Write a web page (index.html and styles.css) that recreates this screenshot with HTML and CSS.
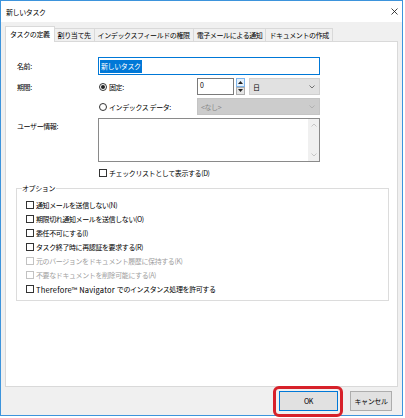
FILE: index.html
```html
<!DOCTYPE html>
<html lang="ja">
<head>
<meta charset="utf-8">
<title>新しいタスク</title>
<link rel="stylesheet" href="styles.css">
</head>
<body>
<div class="window">
  <div class="titlebar">
    <span class="title">新しいタスク</span>
    <svg class="close" viewBox="0 0 7 7" width="7" height="7"><path d="M0.5 0.5L6.5 6.5M6.5 0.5L0.5 6.5" stroke="#111" stroke-width="0.8" fill="none"/></svg>
  </div>
  <div class="client">
    <div class="tabs">
      <div class="tab active">タスクの定義</div>
      <div class="tab">割り当て先</div>
      <div class="tab">インデックスフィールドの権限</div>
      <div class="tab">電子メールによる通知</div>
      <div class="tab">ドキュメントの作成</div>
    </div>
    <div class="panel">
      <div class="form">
        <div class="lbl">名前:</div>
        <div class="input focus"><span class="sel">新しいタスク</span></div>

        <div class="lbl">期間:</div>
        <div class="field">
          <span class="opt"><span class="radio on"></span>固定:</span>
          <div class="spin-input">0</div>
          <div class="spin-btns">
            <div class="spin-btn up"><svg viewBox="0 0 5 3" width="5" height="3"><path d="M0 3L2.5 0L5 3Z" fill="#222"/></svg></div>
            <div class="spin-btn"><svg viewBox="0 0 5 3" width="5" height="3"><path d="M0 0L2.5 3L5 0Z" fill="#222"/></svg></div>
          </div>
          <div class="combo unit">
            <span>日</span>
            <svg class="chev" viewBox="0 0 6 4" width="6" height="4"><path d="M0.5 0.5L3 3L5.5 0.5" stroke="#555" stroke-width="0.8" fill="none"/></svg>
          </div>
        </div>

        <div></div>
        <div class="field">
          <span class="opt"><span class="radio"></span>インデックス データ:</span>
          <div class="combo disabled">
            <span>&lt;なし&gt;</span>
            <svg class="chev" viewBox="0 0 6 4" width="6" height="4"><path d="M0.5 0.5L3 3L5.5 0.5" stroke="#aaa" stroke-width="0.8" fill="none"/></svg>
          </div>
        </div>

        <div class="lbl top">ユーザー情報:</div>
        <div class="textarea">
          <div class="scroll">
            <svg viewBox="0 0 6 4" width="6" height="4"><path d="M0.5 3.5L3 1L5.5 3.5" stroke="#bbb" stroke-width="0.8" fill="none"/></svg>
            <svg viewBox="0 0 6 4" width="6" height="4"><path d="M0.5 0.5L3 3L5.5 0.5" stroke="#bbb" stroke-width="0.8" fill="none"/></svg>
          </div>
        </div>

        <div></div>
        <div class="check-row"><span class="check"></span>チェックリストとして表示する(D)</div>
      </div>

      <fieldset class="group">
        <legend>オプション</legend>
        <div class="opt-row"><span class="check"></span>通知メールを送信しない(N)</div>
        <div class="opt-row"><span class="check"></span>期限切れ通知メールを送信しない(O)</div>
        <div class="opt-row"><span class="check"></span>委任不可にする(I)</div>
        <div class="opt-row"><span class="check"></span>タスク終了時に再認証を要求する(R)</div>
        <div class="opt-row disabled"><span class="check"></span>元のバージョンをドキュメント履歴に保持する(K)</div>
        <div class="opt-row disabled"><span class="check"></span>不要なドキュメントを削除可能にする(A)</div>
        <div class="opt-row"><span class="check"></span><span class="latin">Therefore™ Navigator&nbsp;</span>でのインスタンス処理を許可する</div>
      </fieldset>
    </div>
    <div class="footer">
      <button class="btn ok">OK</button>
      <button class="btn cancel">キャンセル</button>
    </div>
  </div>
  <div class="highlight"></div>
</div>
</body>
</html>
```

FILE: styles.css
```css
html, body {
  margin: 0;
  padding: 0;
}
body {
  width: 405px;
  height: 418px;
  background: #ffffff;
  font-family: "Noto Sans CJK JP", "Noto Sans", sans-serif;
  font-size: 7px;
  letter-spacing: -0.4px;
  color: #000;
  overflow: hidden;
}
.window {
  position: relative;
  width: 403px;
  height: 416px;
  border: 1px solid #3d94dc;
  box-sizing: border-box;
  display: flex;
  flex-direction: column;
}
.titlebar {
  height: 21px;
  flex: none;
  background: #fff;
  display: flex;
  align-items: center;
  justify-content: space-between;
  padding: 0 4px 0 5px;
}
.title {
  line-height: 12px;
}
.close {
  display: block;
  margin-top: -1px;
}
.client {
  flex: 1;
  background: #f0f0f0;
  padding: 4px 4px 0 4px;
  display: flex;
  flex-direction: column;
  min-height: 0;
}
.tabs {
  height: 15px;
  flex: none;
  display: flex;
  align-items: flex-end;
  position: relative;
  z-index: 1;
}
.tab {
  height: 13px;
  box-sizing: border-box;
  border: 1px solid #d9d9d9;
  border-bottom: none;
  margin-left: -1px;
  padding: 0 3px;
  line-height: 12px;
  background: #f0f0f0;
  white-space: nowrap;
}
.tab:first-child {
  margin-left: 0;
}
.tab.active {
  height: 16px;
  margin-bottom: -1px;
  background: #fff;
  padding: 0 4px;
  line-height: 14px;
  position: relative;
  z-index: 2;
}
.panel {
  flex: 1;
  background: #fff;
  border: 1px solid #d9d9d9;
  padding: 15px 8px 0 11px;
  min-height: 0;
}
.form {
  display: grid;
  grid-template-columns: 81px 222px;
  grid-template-rows: 18px 17px 17px 44px 12px;
  row-gap: 3px;
}
.lbl {
  display: flex;
  align-items: center;
}
.lbl.top {
  align-items: flex-start;
  line-height: 16px;
}
.input {
  box-sizing: border-box;
  border: 1px solid #0078d7;
  background: #fff;
  padding: 0 1px;
  display: flex;
  align-items: center;
}
.sel {
  background: #0078d7;
  color: #fff;
  line-height: 13px;
  padding: 0 1px;
}
.field {
  display: flex;
  align-items: center;
}
.opt {
  width: 99px;
  flex: none;
  display: flex;
  align-items: center;
  white-space: nowrap;
}
.radio {
  width: 8px;
  height: 8px;
  box-sizing: border-box;
  border: 1px solid #333;
  border-radius: 50%;
  margin: 0 2px 0 1px;
  display: flex;
  align-items: center;
  justify-content: center;
  background: #fff;
}
.radio.on::after {
  content: "";
  width: 4px;
  height: 4px;
  border-radius: 50%;
  background: #222;
}
.spin-input {
  width: 37px;
  height: 17px;
  box-sizing: border-box;
  border: 1px solid #7a7a7a;
  background: #fff;
  padding: 0 2px;
  line-height: 13px;
  flex: none;
}
.spin-btns {
  width: 9px;
  height: 17px;
  margin-left: 2px;
  display: flex;
  flex-direction: column;
  flex: none;
}
.spin-btn {
  flex: 1;
  box-sizing: border-box;
  border: 1px solid #adadad;
  background: #e5e5e5;
  display: flex;
  align-items: center;
  justify-content: center;
}
.spin-btn.up {
  border-color: #7eb4ea;
  background: #e5f1fb;
}
.spin-btn svg {
  display: block;
}
.combo {
  flex: 1;
  height: 17px;
  box-sizing: border-box;
  border: 1px solid #cfcfcf;
  background: #e1e1e1;
  display: flex;
  align-items: center;
  justify-content: space-between;
  padding: 0 4px 0 3px;
}
.combo.unit {
  margin-left: 4px;
}
.combo.disabled {
  background: #cccccc;
  border-color: #c4c4c4;
  color: #8a8a8a;
}
.chev {
  display: block;
}
.textarea {
  box-sizing: border-box;
  border: 1px solid #8a8a8a;
  background: #fff;
  display: flex;
  justify-content: flex-end;
}
.scroll {
  width: 11px;
  background: #f0f0f0;
  display: flex;
  flex-direction: column;
  align-items: center;
  justify-content: space-between;
  padding: 4px 0;
}
.scroll svg {
  display: block;
}
.check-row {
  margin-top: 3px;
  display: flex;
  align-items: center;
  line-height: 12px;
  white-space: nowrap;
}
.check {
  width: 8px;
  height: 8px;
  box-sizing: border-box;
  border: 1px solid #333;
  background: #fff;
  margin: 0 2px 0 1px;
  flex: none;
}
.group {
  margin: 5px 0 0 -1px;
  padding: 4px 0 4px 0;
  border: 1px solid #dcdcdc;
  min-width: 0;
}
.group legend {
  margin-left: 5px;
  padding: 0 1px 0 0;
  line-height: 12px;
}
.opt-row {
  height: 14px;
  display: flex;
  align-items: center;
  padding-left: 9px;
  white-space: nowrap;
}
.opt-row .check {
  margin: 0 2px 0 0;
}
.opt-row.disabled {
  color: #a0a0a0;
}
.opt-row.disabled .check {
  border-color: #c2c2c2;
}
.latin {
  font-size: 7.5px;
  letter-spacing: 0.2px;
}
.footer {
  height: 28px;
  flex: none;
  display: flex;
  justify-content: flex-end;
  align-items: flex-start;
  gap: 12px;
  padding: 4px 6px 0 0;
  box-sizing: border-box;
}
.btn {
  height: 20px;
  box-sizing: border-box;
  background: #e1e1e1;
  border: 1px solid #adadad;
  font: inherit;
  letter-spacing: inherit;
  color: #000;
  padding: 0;
  margin: 0;
}
.btn.ok {
  width: 59px;
  border-color: #0078d7;
}
.btn.cancel {
  width: 42px;
}
.highlight {
  position: absolute;
  left: 272px;
  top: 385px;
  width: 70px;
  height: 31px;
  box-sizing: border-box;
  border: 3px solid #d7212a;
  border-radius: 6px;
  pointer-events: none;
}
```
